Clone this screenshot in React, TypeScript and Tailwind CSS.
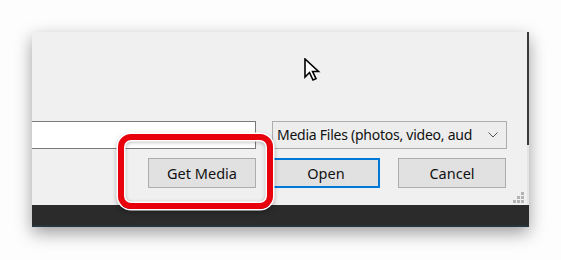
import React from "react";

export default function App() {
  const font = { fontFamily: '"Segoe UI", "Noto Sans", "Open Sans", sans-serif' };
  return (
    <div className="relative w-[561px] h-[260px] overflow-hidden bg-[#fdfdfd] pt-[32px] pl-[32px]" style={font}>
      <div className="w-[497px] flex flex-col shadow-[0_6px_16px_rgba(0,0,0,0.38)]">
        <div className="relative h-[173px] bg-[#f0f0f0] flex flex-col">
          <div className="absolute right-0 top-0 w-[2px] h-[113px] bg-[#3a3a3a]" />
          <div className="absolute right-0 top-[113px] w-[2px] h-[60px] bg-[#e4e4e4]" />
          <div className="h-[89px]" />
          <div className="flex h-[28px] gap-[16px]">
            <div className="w-[224px] bg-white border-y border-r border-[#7a7a7a]" />
            <div className="w-[235px] bg-[#ededed] border border-[#adadad] flex items-center justify-between pl-[4px] pr-[8px] text-[14px] text-[#111] leading-none">
              <span className="whitespace-nowrap tracking-[-0.25px]">Media Files (photos, video, aud</span>
              <svg width="10" height="6" viewBox="0 0 10 6" className="shrink-0">
                <path d="M0.5 0.5 L5 5 L9.5 0.5" fill="none" stroke="#555" strokeWidth="1" />
              </svg>
            </div>
          </div>
          <div className="flex h-[30px] mt-[9px] pl-[116px]">
            <div className="w-[108px] bg-[#e1e1e1] border border-[#adadad] flex items-center justify-center pt-[1px] text-[14.5px] text-[#111]">Get Media</div>
            <div className="w-[108px] ml-[16px] bg-[#e1e1e1] border-2 border-[#0078d7] flex items-center justify-center pt-[1px] text-[14.5px] text-[#111]">Open</div>
            <div className="w-[108px] ml-[18px] bg-[#e1e1e1] border border-[#adadad] flex items-center justify-center pt-[1px] text-[14.5px] text-[#111]">Cancel</div>
          </div>
          <div className="flex justify-end pr-[5px] pt-[4px]">
            <svg width="11" height="11" viewBox="0 0 11 11">
              <rect x="8" y="0" width="3" height="3" fill="#b4b4b4" />
              <rect x="4" y="4" width="3" height="3" fill="#b4b4b4" />
              <rect x="8" y="4" width="3" height="3" fill="#b4b4b4" />
              <rect x="0" y="8" width="3" height="3" fill="#b4b4b4" />
              <rect x="4" y="8" width="3" height="3" fill="#b4b4b4" />
              <rect x="8" y="8" width="3" height="3" fill="#b4b4b4" />
            </svg>
          </div>
        </div>
        <div className="h-[22px] bg-[#2b2b2b] border-b-[2px] border-[#26363c]" />
      </div>

      {/* red highlight */}
      <div className="absolute left-[118px] top-[134px] w-[155px] h-[75px] rounded-[13px] border-[6px] border-[#e8000c] shadow-[0_0_0_1.5px_#fff,inset_0_0_0_1.5px_#fff,0_2px_5px_1px_rgba(0,0,0,0.35),inset_0_1px_4px_1px_rgba(0,0,0,0.3)]" />

      {/* cursor */}
      <svg className="absolute left-[304px] top-[58px]" width="17" height="25" viewBox="0 0 17 25">
        <path d="M1 1 L1 19 L5.5 14.5 L9 22 L12 20.6 L8.6 13.5 L14.5 13.5 Z" fill="#fff" stroke="#000" strokeWidth="1.6" strokeLinejoin="miter" />
      </svg>
    </div>
  );
}
